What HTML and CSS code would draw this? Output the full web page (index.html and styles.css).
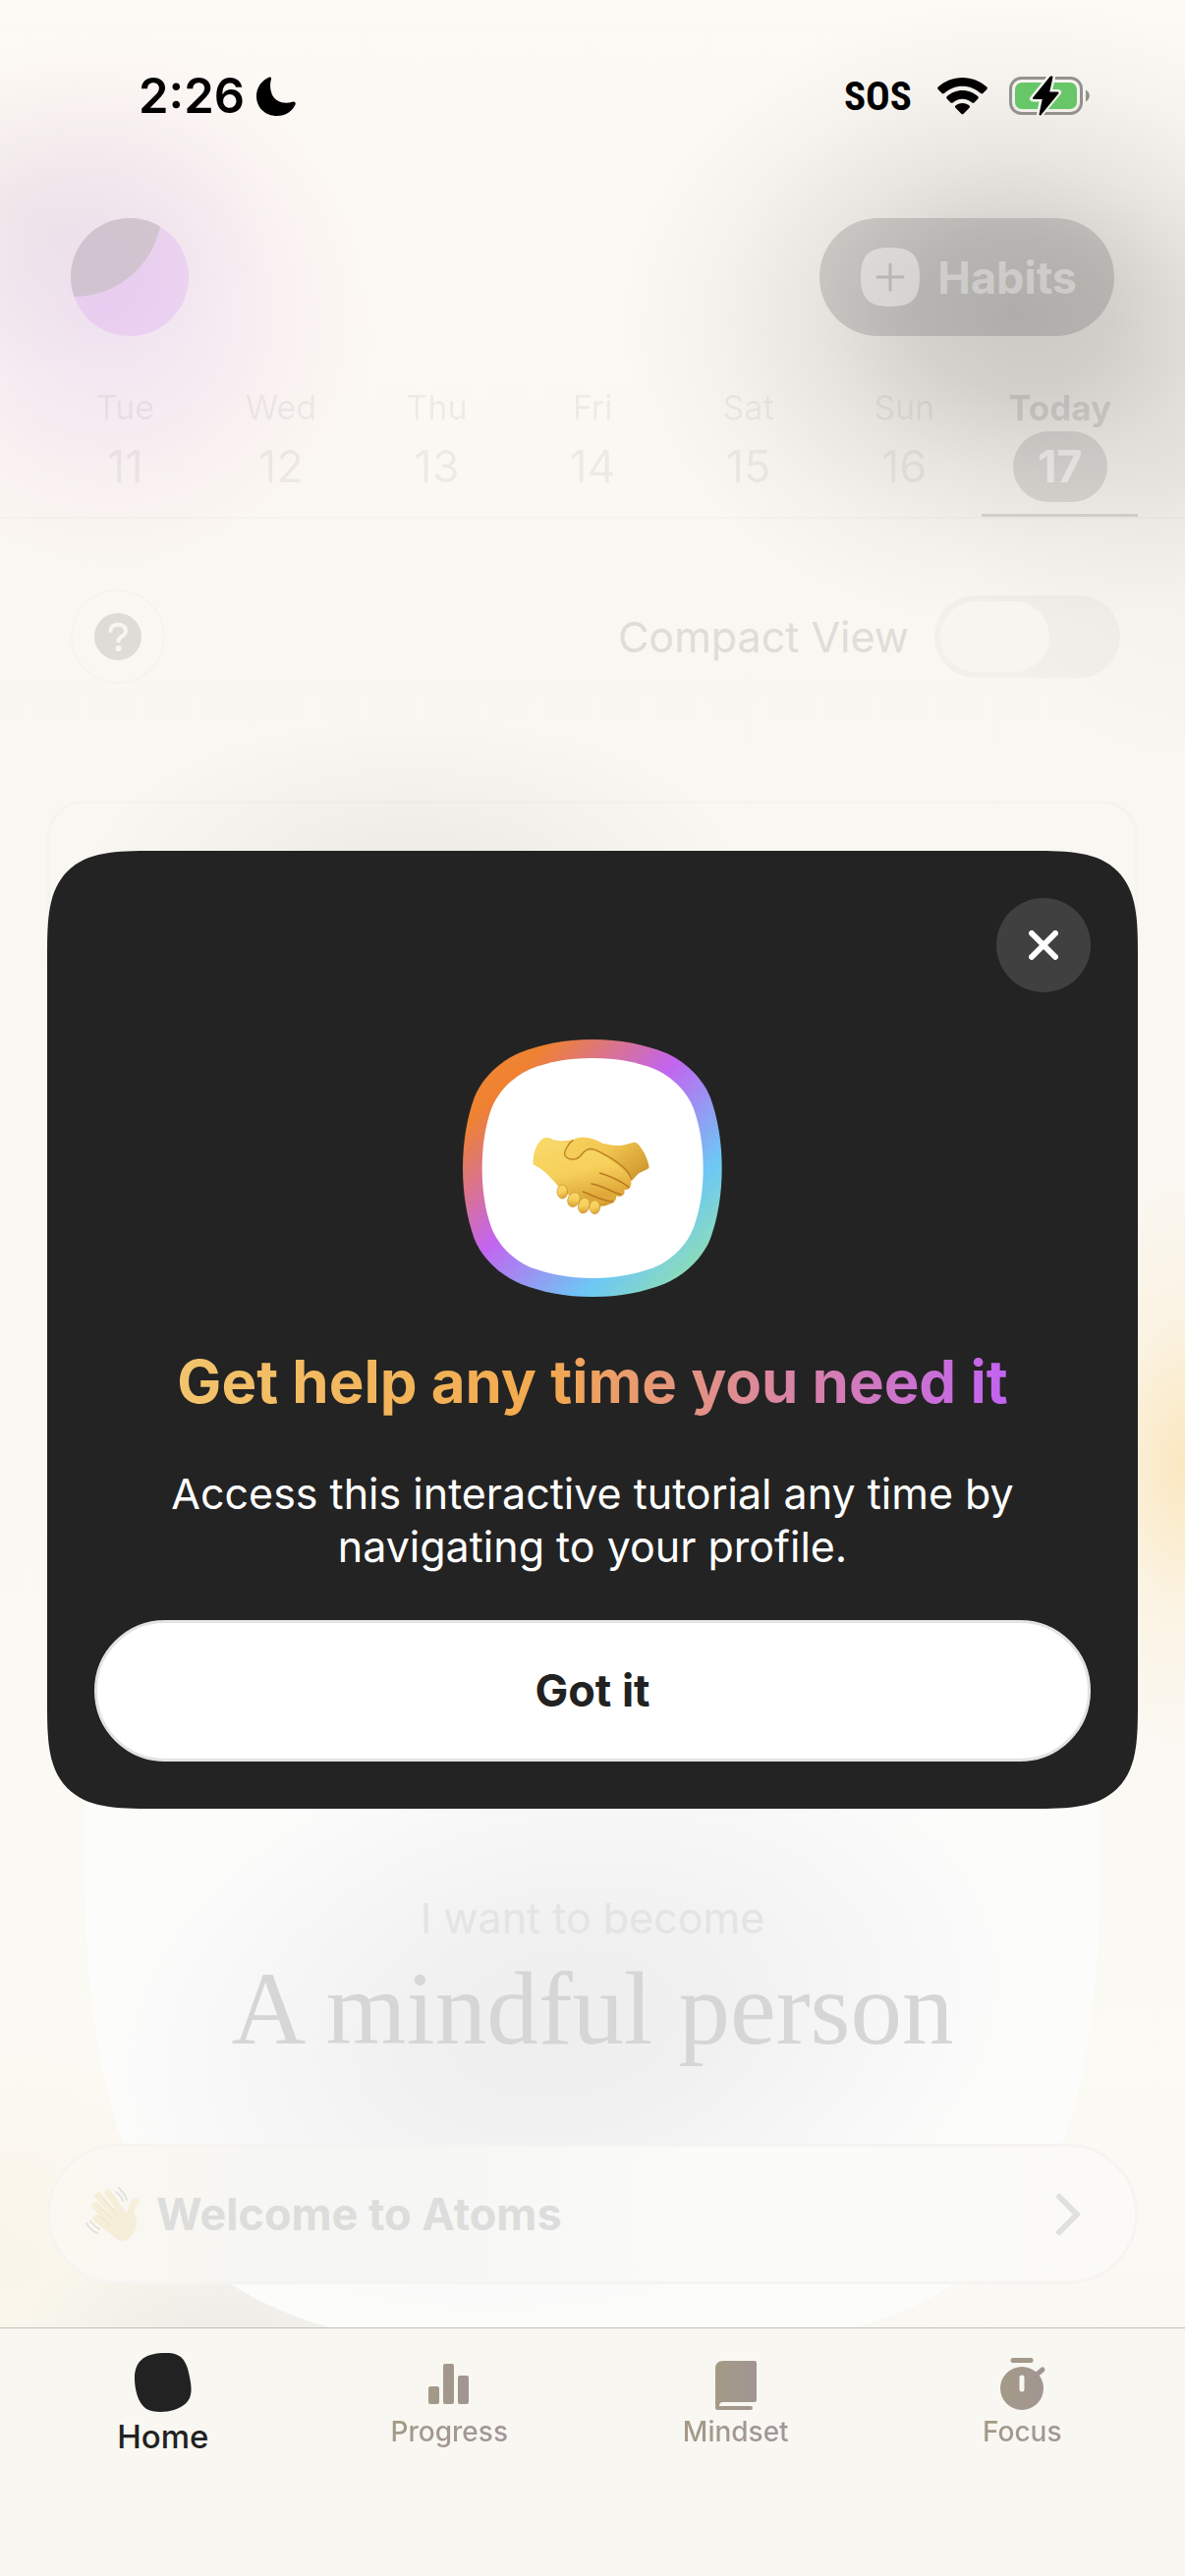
FILE: index.html
```html
<!DOCTYPE html>
<html lang="en">
<head>
<meta charset="utf-8">
<meta name="viewport" content="width=device-width, initial-scale=1">
<title>Atoms</title>
<link rel="stylesheet" href="styles.css">
</head>
<body>
<div class="app">
  <div class="status">
    <div class="status-left">
      <span class="time">2:26</span>
      <svg width="40" height="40" viewBox="0 0 40 40" aria-hidden="true"><path d="M12.500 .8C14 -.2 15.600 .8 15 2.600C13.500 7 13.800 13.500 16 18.500C19.500 25.500 27.500 28.200 36.500 25.800C39 25 40.400 26.500 39.400 28.800C36 35.800 29.500 40 21 40C9 40 0 31.500 0 20C0 11.500 5 4 12.500 .8Z"/></svg>
    </div>
    <div class="status-right">
      <span class="sos">SOS</span>
      <svg width="51" height="38" viewBox="0 0 51 38" aria-hidden="true"><path d="M25.500 0C35 0 43.800 3.600 50.300 9.600C51 10.300 51 11.300 50.300 12L46.300 16C45.700 16.600 44.800 16.600 44.100 16C39 11.300 32.500 8.700 25.500 8.700S12 11.300 6.900 16C6.200 16.600 5.300 16.600 4.700 16L.7 12C0 11.300 0 10.300 .7 9.600C7.200 3.600 16 0 25.500 0Z"/><path d="M25.500 13C31.600 13 37.200 15.400 41.300 19.200C42 19.900 42 20.900 41.300 21.600L37.500 25.400C36.900 26 35.900 26 35.200 25.400C32.600 23.100 29.200 21.700 25.500 21.700S18.400 23.100 15.800 25.400C15.100 26 14.100 26 13.500 25.400L9.700 21.600C9 20.900 9 19.900 9.700 19.200C13.800 15.400 19.400 13 25.500 13Z"/><path d="M25.500 26C28.300 26 30.700 27 32.500 28.600C33.200 29.200 33.200 30.100 32.500 30.800L26.700 36.700C26 37.400 25 37.400 24.300 36.700L18.500 30.800C17.800 30.100 17.800 29.200 18.500 28.600C20.300 27 22.700 26 25.500 26Z"/></svg>
      <svg width="82" height="42" viewBox="0 0 82 42" aria-hidden="true">
        <rect x="1.500" y="2.500" width="72" height="36" rx="11" fill="none" stroke="#92918d" stroke-width="3"/>
        <path d="M78 14.500C83 17 83 24 78 26.500Z" fill="#92918d"/>
        <rect x="6" y="7" width="63" height="27" rx="7" fill="#67c768"/>
        <path d="M42 1L24 23.500H34L31 40L50 17H40.500L44 1.500Z" fill="#000" stroke="#f6f4ef" stroke-width="6" stroke-linejoin="round"/>
        <path d="M42.500 1.500L25 23H35L31.500 39.500L49.500 17.500H40L43.500 1.500Z" fill="#000" stroke="#000" stroke-width="2" stroke-linejoin="round"/>
      </svg>
    </div>
  </div>

  <header class="topbar">
    <button class="avatar" type="button" aria-label="Profile">
      <svg width="120" height="120" viewBox="0 0 120 120" aria-hidden="true">
        <clipPath id="disc"><circle cx="60" cy="60" r="60"/></clipPath>
        <circle cx="60" cy="60" r="60" fill="#d282f5" fill-opacity=".2"/>
        <circle cx="3" cy="-10" r="90" fill="#c2bcba" fill-opacity=".6" clip-path="url(#disc)"/>
      </svg>
    </button>
    <button class="add" type="button">
      <svg width="60" height="60" viewBox="-30 -30 60 60" aria-hidden="true"><path d="M0-30C22-30 30-22 30 0S22 30 0 30S-30 22-30 0S-22-30 0-30Z" fill="#fff" fill-opacity=".42"/><path d="M0-13V13M-13 0H13" stroke="#b7b6b3" stroke-width="3" stroke-linecap="round"/></svg>
      Habits
    </button>
  </header>

  <nav class="days" aria-label="Days">
    <a class="day" href="#tue">Tue<span class="num">11</span></a>
    <a class="day" href="#wed">Wed<span class="num">12</span></a>
    <a class="day" href="#thu">Thu<span class="num">13</span></a>
    <a class="day" href="#fri">Fri<span class="num">14</span></a>
    <a class="day" href="#sat">Sat<span class="num">15</span></a>
    <a class="day" href="#sun">Sun<span class="num">16</span></a>
    <a class="day today" href="#today">Today<span class="num">17</span></a>
  </nav>

  <main class="main">
    <div class="controls">
      <button class="help" type="button" aria-label="Help">
        <svg width="48" height="48" viewBox="0 0 48 48" aria-hidden="true"><circle cx="24" cy="24" r="24" fill="#dedcd7"/><path d="M16.500 18C16.500 9.500 32 9.500 32 18.500C32 24 24.500 23.500 24.500 28.500" fill="none" stroke="#f6f5f0" stroke-width="4" stroke-linecap="round"/><circle cx="24.500" cy="36" r="3" fill="#f6f5f0"/></svg>
      </button>
      <label class="compact">Compact View <input class="toggle" type="checkbox" role="switch"></label>
    </div>

    <section class="habit-card" aria-label="Habit"></section>

    <section class="identity">
      <svg class="identity-shape" viewBox="-517 -517 1034 1034" aria-hidden="true">
        <defs><radialGradient id="haze" gradientUnits="userSpaceOnUse" cx="0" cy="0" r="1" gradientTransform="translate(-30 180) rotate(-10) scale(470 300)">
          <stop offset="0" stop-color="#eee"/><stop offset=".35" stop-color="#f1f1f1"/><stop offset=".7" stop-color="#f7f7f7"/><stop offset="1" stop-color="#fcfcfb"/>
        </radialGradient></defs>
        <path d="M0-517C405-517 517-405 517 0S405 517 0 517S-517 405-517 0S-405-517 0-517Z" fill="url(#haze)"/>
      </svg>
      <p class="want">I want to become</p>
      <h1 class="person">A mindful person</h1>
    </section>

    <a class="welcome" href="#welcome">
      <svg width="56" height="56" viewBox="0 0 56 56" fill="none" stroke="#f6eed8" stroke-linecap="round" aria-hidden="true">
        <path d="M23 6L38 27M13 9L32 32M10 19L28 38M11 32L26 44M51 15C46 19 47 24 45 33" stroke-width="7"/>
        <path d="M24 25C30 18 36 20 42 26L48 22C56 37 52 50 39 55C33 56 27 50 19 41Z" fill="#f6eed8" stroke="none"/>
        <path d="M18 12L32 28M13 19L28 33M13 29L25 39" stroke="#ece1c9" stroke-width="1"/>
        <path d="M31 5C35 8 37 11 38 14M34 1C38 5 41 9 42 13M5 35C8 39 10 41 14 43M1 37C4 42 7 45 12 47" stroke="#e4e2dc" stroke-width="2"/>
      </svg>
      <span class="welcome-text">Welcome to Atoms</span>
      <svg width="24" height="42" viewBox="0 0 24 42" aria-hidden="true"><path d="M3 3L21 21L3 39" fill="none" stroke="#e0e0de" stroke-width="6" stroke-linecap="round" stroke-linejoin="round"/></svg>
    </a>
  </main>

  <nav class="tabs" aria-label="Main">
    <svg class="defs" width="0" height="0" aria-hidden="true"><linearGradient id="taupe"><stop offset="0" stop-color="#a49a86"/><stop offset="1" stop-color="#a29593"/></linearGradient></svg>
    <a class="tab active" href="#home">
      <svg width="60" height="60" viewBox="0 0 60 60" aria-hidden="true"><path d="M29 0C44-1 51 3 55 16C57 24 59 32 58.500 39C58 50 50 55 41 58C33 60.500 20 61 13 57C4 51 1 36 1 26C1 10 9 1 29 0Z" fill="#222"/></svg>
      <span>Home</span>
    </a>
    <a class="tab" href="#progress">
      <svg width="60" height="60" viewBox="0 0 60 60" fill="url(#taupe)" aria-hidden="true"><path d="M11 34H18Q20 34 20 36V50Q20 52 18 52H11Q9 52 9 50V36Q9 34 11 34ZM26 11H33Q35 11 35 13V50Q35 52 33 52H26Q24 52 24 50V13Q24 11 26 11ZM41 23H48Q50 23 50 25V50Q50 52 48 52H41Q39 52 39 50V25Q39 23 41 23Z"/></svg>
      <span>Progress</span>
    </a>
    <a class="tab" href="#mindset">
      <svg width="60" height="60" viewBox="0 0 60 60" fill="url(#taupe)" aria-hidden="true"><path d="M17 8H49Q51 8 51 10V48Q51 50 49 50H17Q13 50 13 54H45Q47 54 47 56T45 58H11Q9 58 9 56V16Q9 8 17 8Z"/></svg>
      <span>Mindset</span>
    </a>
    <a class="tab" href="#focus">
      <svg width="60" height="60" viewBox="0 0 60 60" aria-hidden="true"><circle cx="30" cy="36" r="22" fill="url(#taupe)"/><path d="M21 7.500H39" stroke="#a39889" stroke-width="5" stroke-linecap="round"/><path d="M45 22L51 17" stroke="#a29591" stroke-width="5" stroke-linecap="round"/><path d="M30 25V37" stroke="#f8f7f2" stroke-width="5" stroke-linecap="round"/></svg>
      <span>Focus</span>
    </a>
  </nav>
</div>

<div class="overlay">
  <div class="modal" role="dialog" aria-modal="true" aria-labelledby="modal-title">
    <button class="close" type="button" aria-label="Close">
      <svg width="30" height="30" viewBox="0 0 30 30" aria-hidden="true"><path d="M3 3L27 27M27 3L3 27" stroke="#fff" stroke-width="6" stroke-linecap="round"/></svg>
    </button>
    <svg class="badge" width="264" height="262" viewBox="94 84 792 786" aria-hidden="true">
      <defs>
        <linearGradient id="rim" x1="0" y1="0" x2="1" y2="1"><stop offset="0" stop-color="#f08a3c"/><stop offset=".17" stop-color="#ef8230"/><stop offset=".45" stop-color="#c364f0"/><stop offset=".73" stop-color="#6cc8f5"/><stop offset=".92" stop-color="#92e0ae"/><stop offset="1" stop-color="#98e29c"/></linearGradient>
        <linearGradient id="skin" x1="0" y1="0" x2=".3" y2="1"><stop offset="0" stop-color="#f9da6c"/><stop offset=".6" stop-color="#f6d05a"/><stop offset="1" stop-color="#dfa838"/></linearGradient>
        <linearGradient id="cuff" x1="0" y1="0" x2="1" y2=".6"><stop offset="0" stop-color="#f6d25e"/><stop offset=".5" stop-color="#f1c64f"/><stop offset="1" stop-color="#d39c32"/></linearGradient>
      </defs>
      <path d="M490 84C576 84 645 99 710 124C770 148 828 204 850 262C873 325 885 400 885 477C885 554 873 629 850 692C828 750 770 806 710 830C645 855 576 870 490 870C404 870 335 855 270 830C209 806 151 750 129 692C106 629 94 554 94 477C94 400 106 325 129 262C151 204 209 148 270 124C335 99 404 84 490 84Z" fill="url(#rim)"/>
      <path d="M490 141C565 141 622 153 677 173C732 196 779 243 799 296C818 350 828 410 828 477C828 544 818 604 799 658C779 711 732 758 677 781C622 801 565 813 490 813C415 813 358 801 303 781C248 758 201 711 181 658C162 604 153 544 153 477C153 410 162 350 181 296C201 243 248 196 303 173C358 153 415 141 490 141Z" fill="#fff"/>
      <g stroke-linejoin="round" stroke-linecap="round">
        <path d="M350 384C330 382 306 425 310 466C335 478 350 490 382 528L430 570C450 590 500 598 530 592C545 585 560 585 560 568L600 470L480 412L430 391C400 396 380 396 362 386Z" fill="url(#cuff)"/>
        <path d="M350 384C330 382 306 425 310 466C335 478 350 490 384 530C400 545 425 550 455 548C470 570 500 590 530 580C548 586 566 580 561 562C576 567 592 560 587 543C596 544 606 541 608 524C612 490 570 460 530 440L480 410L420 400C400 398 380 398 362 387C358 384 354 384 350 384Z" fill="url(#skin)"/>
        <path d="M430 391C455 375 490 384 522 402C550 405 560 416 612 399C622 396 630 402 638 415C652 435 660 455 663 475C660 483 640 486 628 496L609 517C603 488 560 462 500 421C480 412 465 424 455 437C440 453 420 452 410 443C398 432 410 420 418 405Z" fill="url(#cuff)"/>
        <path d="M430 392C420 399 400 425 406 438C414 452 438 455 452 441C465 422 478 413 500 422C540 441 600 474 608 510" fill="none" stroke="#bd7f22" stroke-width="4"/>
        <path d="M513 492C545 502 580 519 601 535M487 525C520 530 555 552 577 558M461 549C490 560 520 577 552 579" fill="none" stroke="#b87a20" stroke-width="5"/>
        <g fill="url(#skin)" stroke="#c78d2c" stroke-width="2">
          <ellipse cx="398" cy="549" rx="16" ry="21"/><ellipse cx="433" cy="573" rx="18" ry="23" transform="rotate(25 433 573)"/><ellipse cx="464" cy="591" rx="17" ry="24" transform="rotate(15 464 591)"/><ellipse cx="497" cy="596" rx="16" ry="21"/>
        </g>
      </g>
    </svg>
    <h2 class="modal-title" id="modal-title"><span>Get help any time you need it</span></h2>
    <p class="modal-text">Access this interactive tutorial any time by navigating to your profile.</p>
    <button class="got-it" type="button">Got it</button>
  </div>
</div>
</body>
</html>
```
FILE: styles.css
```css
* {
  box-sizing: border-box;
}

body {
  margin: 0;
  font-family: Inter, "Liberation Sans", sans-serif;
  font-size: 43px;
  color: #222;
  background-color: #fcf9f4;
}

button {
  margin: 0;
  padding: 0;
  border: 0;
  background: none;
  font: inherit;
  color: inherit;
}

a {
  color: inherit;
  text-decoration: none;
}

svg {
  display: block;
  flex: none;
}

/* Soft glows left by the content behind the frosted layer */
.app {
  display: flex;
  flex-direction: column;
  min-height: 100vh;
  background:
    radial-gradient(400px 320px at 1030px 320px, rgba(34, 34, 34, .22), rgba(34, 34, 34, .18) 25%, rgba(34, 34, 34, .09) 50%, rgba(34, 34, 34, .03) 75%, transparent),
    radial-gradient(240px 300px at 1206px 480px, rgba(34, 34, 34, .05), rgba(34, 34, 34, .02) 50%, transparent),
    radial-gradient(280px 280px at 110px 310px, rgba(190, 130, 230, .19), rgba(200, 135, 225, .12) 40%, rgba(225, 150, 200, .05) 75%, transparent),
    radial-gradient(240px 160px at 40px 220px, rgba(60, 60, 60, .05), transparent),
    radial-gradient(340px 170px at 420px 900px, rgba(34, 34, 34, .07), rgba(34, 34, 34, .03) 50%, transparent),
    radial-gradient(160px 300px at 100% 1490px, rgba(250, 215, 140, .5), rgba(252, 225, 170, .22) 50%, transparent),
    radial-gradient(220px 120px at 240px 2380px, rgba(34, 34, 34, .06), transparent),
    radial-gradient(280px 260px at 0 2280px, rgba(250, 230, 190, .18), transparent),
    linear-gradient(#fdfaf5, #fbf8f3 500px, #f9f7f2 700px, #fbf8f3 1500px, #fbfaf5 2100px, #f9f8f3 2369px);
}

.status {
  display: flex;
  justify-content: space-between;
  align-items: center;
  height: 222px;
  padding: 78px 97px 104px 141px;
  color: #000;
}

.status-left,
.status-right {
  display: flex;
  align-items: center;
}

.status-left {
  gap: 12px;
}

.status-right {
  gap: 22px;
}

.time {
  font-size: 49px;
  font-weight: 600;
  line-height: 40px;
}

.sos {
  margin-right: 4px;
  font-family: "Liberation Sans Narrow", "Roboto Condensed", Roboto, sans-serif;
  font-size: 41px;
  font-weight: 700;
  line-height: 40px;
}

.topbar {
  display: flex;
  justify-content: space-between;
  padding: 0 72px;
}

.avatar {
  border-radius: 50%;
}

.add {
  display: flex;
  align-items: center;
  gap: 18px;
  height: 120px;
  padding: 0 38px 0 42px;
  border-radius: 60px;
  background: rgba(34, 34, 34, .16);
  color: rgba(255, 255, 255, .36);
  font-size: 45px;
  font-weight: 700;
}

.days {
  display: grid;
  grid-template-columns: repeat(7, 1fr);
  margin-top: 53px;
  padding: 0 48px;
  border-bottom: 2px solid rgba(34, 34, 34, .02);
}

.day {
  display: flex;
  flex-direction: column;
  align-items: center;
  gap: 4px;
  padding-bottom: 12px;
  border-bottom: 3px solid transparent;
  font-size: 34px;
  line-height: 40px;
  color: rgba(34, 34, 34, .07);
}

.num {
  width: 96px;
  border-radius: 36px;
  font-size: 45px;
  line-height: 72px;
  text-align: center;
}

.today {
  border-bottom-color: rgba(34, 34, 34, .14);
  color: rgba(34, 34, 34, .14);
  font-size: 35px;
  font-weight: 700;
}

.today .num {
  background: rgba(34, 34, 34, .12);
  color: rgba(255, 255, 255, .45);
}

.main {
  flex: 1;
  overflow: hidden;
  padding: 72px 48px 44px;
}

.controls {
  display: flex;
  justify-content: space-between;
  align-items: center;
  padding: 0 18px 0 24px;
}

.help {
  display: grid;
  place-items: center;
  width: 96px;
  height: 96px;
  border: 2px solid rgba(34, 34, 34, .02);
  border-radius: 50%;
}

.compact {
  display: flex;
  align-items: center;
  gap: 26px;
  color: #dfddd8;
}

.toggle {
  appearance: none;
  width: 189px;
  height: 84px;
  margin: 0;
  padding: 6px;
  border-radius: 42px;
  background: rgba(34, 34, 34, .03);
}

.toggle::before {
  content: "";
  display: block;
  width: 111px;
  height: 72px;
  border-radius: 36px;
  background: #f7f5f0;
}

.toggle:checked::before {
  margin-left: auto;
}

.habit-card {
  min-height: 500px;
  margin-top: 119px;
  border: 3px solid rgba(34, 34, 34, .02);
  border-radius: 36px;
}

.identity {
  position: relative;
  margin: 48px 38px 0;
  padding: 562px 0 77px;
  text-align: center;
}

.identity-shape {
  position: absolute;
  top: 0;
  left: 0;
  width: 100%;
}

.want,
.person {
  position: relative;
  margin: 0;
}

.want {
  color: #e4e4e4;
  line-height: 54px;
}

.person {
  margin-top: 6px;
  font-family: "Liberation Serif", serif;
  font-size: 105px;
  font-weight: 400;
  line-height: 120px;
  color: #d6d6d6;
}

.welcome {
  position: relative;
  display: flex;
  align-items: center;
  gap: 16px;
  height: 143px;
  padding: 0 56px 0 36px;
  border: 3px solid #f5f4f1;
  border-radius: 72px;
  background: linear-gradient(90deg, #fbf8f1, #f6f6f3 22%, #f6f6f5 35%, #fbfbfa 60%, #fbfaf7);
  font-size: 45px;
  font-weight: 700;
  color: #dddddb;
}

.welcome-text {
  flex: 1;
}

.tabs {
  position: relative;
  display: grid;
  grid-template-columns: repeat(4, 1fr);
  min-height: 253px;
  padding: 25px 20px;
  border-top: 1px solid #c0c0b8;
  background: #f8f7f2;
}

.defs {
  position: absolute;
}

.tab {
  display: flex;
  flex-direction: column;
  align-items: center;
  font-size: 28px;
  font-weight: 500;
  line-height: 40px;
}

.tab span {
  background: linear-gradient(90deg, #a49a86, #a2959a);
  background-clip: text;
  color: transparent;
}

.tab.active {
  font-size: 33px;
  line-height: 50px;
}

.tab.active span {
  background: none;
  color: #222;
}

.overlay {
  position: absolute;
  inset: 0;
  display: grid;
  align-items: center;
  padding: 84px 48px 0;
}

.modal {
  display: flex;
  flex-direction: column;
  align-items: center;
  padding: 48px;
  border-radius: 78px;
  background: #232323;
  color: #fff;
  text-align: center;
}

@supports (corner-shape: squircle) {
  .modal {
    border-radius: 108px;
    corner-shape: superellipse(1.7);
  }
}

.close {
  display: grid;
  place-items: center;
  align-self: flex-end;
  width: 96px;
  height: 96px;
  border-radius: 50%;
  background: #404040;
}

.badge {
  margin-top: 48px;
}

.modal-title {
  margin: 50px 0 0;
  font-size: 60px;
  font-weight: 700;
  line-height: 72px;
}

.modal-title span {
  background: linear-gradient(90deg, #f2c46c, #f3a94e 44%, #c263f2);
  background-clip: text;
  color: transparent;
}

.modal-text {
  max-width: 900px;
  margin: 51px 0 0;
  line-height: 54px;
}

.got-it {
  width: 100%;
  height: 144px;
  margin-top: 48px;
  border: 3px solid #e3e3e3;
  border-radius: 72px;
  background: #fff;
  color: #222;
  font-size: 45px;
  font-weight: 700;
}
```
